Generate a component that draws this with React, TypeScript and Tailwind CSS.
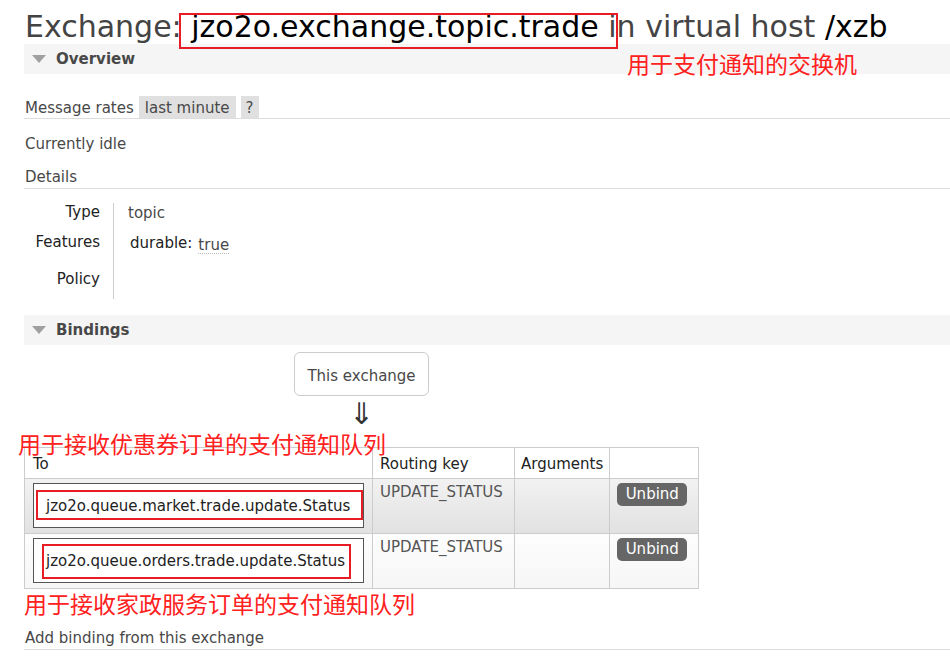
import React from 'react'

const bindings = [
  { to: 'jzo2o.queue.market.trade.update.Status', key: 'UPDATE_STATUS', rowBg: 'bg-gradient-to-b from-[#f2f2f2] to-[#e1e1e1]' },
  { to: 'jzo2o.queue.orders.trade.update.Status', key: 'UPDATE_STATUS', rowBg: 'bg-gradient-to-b from-[#fdfdfd] to-[#f6f6f6]' },
]

const Triangle = () => (
  <svg width="14" height="9" viewBox="0 0 14 9" className="shrink-0">
    <polygon points="0,0 14,0 7,8" fill="#a0a0a0" />
  </svg>
)

const SectionBar = ({ title }: { title: string }) => (
  <div className="h-[30px] bg-[#f5f5f5] flex items-center pl-[8px] gap-[10px]">
    <Triangle />
    <span className="font-bold text-[15px] text-[#484848]">{title}</span>
  </div>
)

export default function App() {
  return (
    <div className="relative w-[950px] h-[660px] overflow-hidden bg-white text-[15px] leading-[18px] text-[#484848] font-['DejaVu_Sans',Verdana,sans-serif]">
      <div className="pl-[24px]">
        {/* Title */}
        <h1 className="pt-[9px] h-[44px] leading-[35px] text-[30px] pl-px whitespace-nowrap text-[#444]">
          Exchange: <span className="text-black">jzo2o.exchange.topic.trade</span> in virtual host <span className="text-black">/xzb</span>
        </h1>

        <SectionBar title="Overview" />

        {/* Message rates */}
        <div className="mt-[22px] h-[23px] flex items-start gap-[5px] border-b border-[#ddd] pl-px">
          <span className="leading-[24px]">Message rates</span>
          <span className="h-[22px] px-[6px] bg-[#e0e0e0] leading-[24px]">last minute</span>
          <span className="h-[22px] w-[18px] text-center bg-[#e0e0e0] leading-[24px]">?</span>
        </div>

        <div className="mt-[16px] pl-px">Currently idle</div>
        <div className="mt-[15px] pl-px pb-[2px] border-b border-[#ddd]">Details</div>

        {/* Details table */}
        <div className="mt-[14px] flex">
          <div className="w-[90px] border-r border-[#ccc] text-right pr-[13px] text-[#222]">
            <div className="h-[30px]">Type</div>
            <div className="h-[30px]">Features</div>
            <div className="h-[36px] pt-[7px]">Policy</div>
          </div>
          <div className="pl-[14px]">
            <div className="h-[31px] pt-px">topic</div>
            <div className="h-[30px] pl-[2px] flex gap-[6px]">
              <span className="text-[#222]">durable:</span>
              <span className="mt-[2px] h-[18px] border-b border-dotted border-[#bbb]">true</span>
            </div>
          </div>
        </div>

        <div className="mt-[16px]">
          <SectionBar title="Bindings" />
        </div>

        {/* Diagram */}
        <div className="ml-[270px] mt-[7px] w-[135px]">
          <div className="h-[44px] pt-[3px] border border-[#ccc] rounded-[6px] flex items-center justify-center">This exchange</div>
          <div className="h-[51px] pt-[7px] text-center text-[30px] leading-[22px] text-[#333]">⇓</div>
        </div>

        {/* Bindings table */}
        <table className="border-collapse border border-[#ccc] text-[#222]">
          <thead>
            <tr className="h-[31px]">
              <th className="w-[348px] border border-[#ccc] text-left font-normal px-[8px] pt-[2px] align-middle">To</th>
              <th className="w-[142px] border border-[#ccc] text-left font-normal px-[7px] pt-[2px]">Routing key</th>
              <th className="w-[95px] border border-[#ccc] text-left font-normal px-[6px] pt-[2px]">Arguments</th>
              <th className="w-[89px] border border-[#ccc]"></th>
            </tr>
          </thead>
          <tbody>
            {bindings.map((b) => (
              <tr key={b.to} className={`h-[55px] ${b.rowBg}`}>
                <td className="border border-[#ccc] px-[8px] py-[4px] align-top">
                  <div className="h-[45px] border border-[#555] bg-white flex items-center pl-[12px] whitespace-nowrap">{b.to}</div>
                </td>
                <td className="border border-[#ccc] px-[7px] pt-[4px] align-top text-[#555]">{b.key}</td>
                <td className="border border-[#ccc]"></td>
                <td className="border border-[#ccc] align-top pt-[4px] pl-[7px]">
                  <button className="w-[70px] h-[23px] rounded-[5px] bg-[#666] text-white leading-[23px]">Unbind</button>
                </td>
              </tr>
            ))}
          </tbody>
        </table>

        <div className="mt-[40px] pl-px pb-[2px] border-b border-[#ddd]">Add binding from this exchange</div>
      </div>

      {/* Red annotations drawn over the screenshot */}
      <div className="absolute left-[179px] top-[13px] w-[439px] h-[36px] border-2 border-[#e81c24]" />
      <div className="absolute left-[36px] top-[490px] w-[327px] h-[30px] border-2 border-[#e81c24]" />
      <div className="absolute left-[42px] top-[544px] w-[309px] h-[35px] border-2 border-[#e81c24]" />
      <div className="absolute left-[627px] top-[50px] text-[23px] leading-[26px] text-[#ff2020] font-['Noto_Sans_CJK_SC',sans-serif] whitespace-nowrap">用于支付通知的交换机</div>
      <div className="absolute left-[18px] top-[430px] text-[23px] leading-[26px] text-[#ff2020] font-['Noto_Sans_CJK_SC',sans-serif] whitespace-nowrap">用于接收优惠券订单的支付通知队列</div>
      <div className="absolute left-[24px] top-[590px] text-[23px] leading-[26px] text-[#ff2020] font-['Noto_Sans_CJK_SC',sans-serif] whitespace-nowrap">用于接收家政服务订单的支付通知队列</div>
    </div>
  )
}
